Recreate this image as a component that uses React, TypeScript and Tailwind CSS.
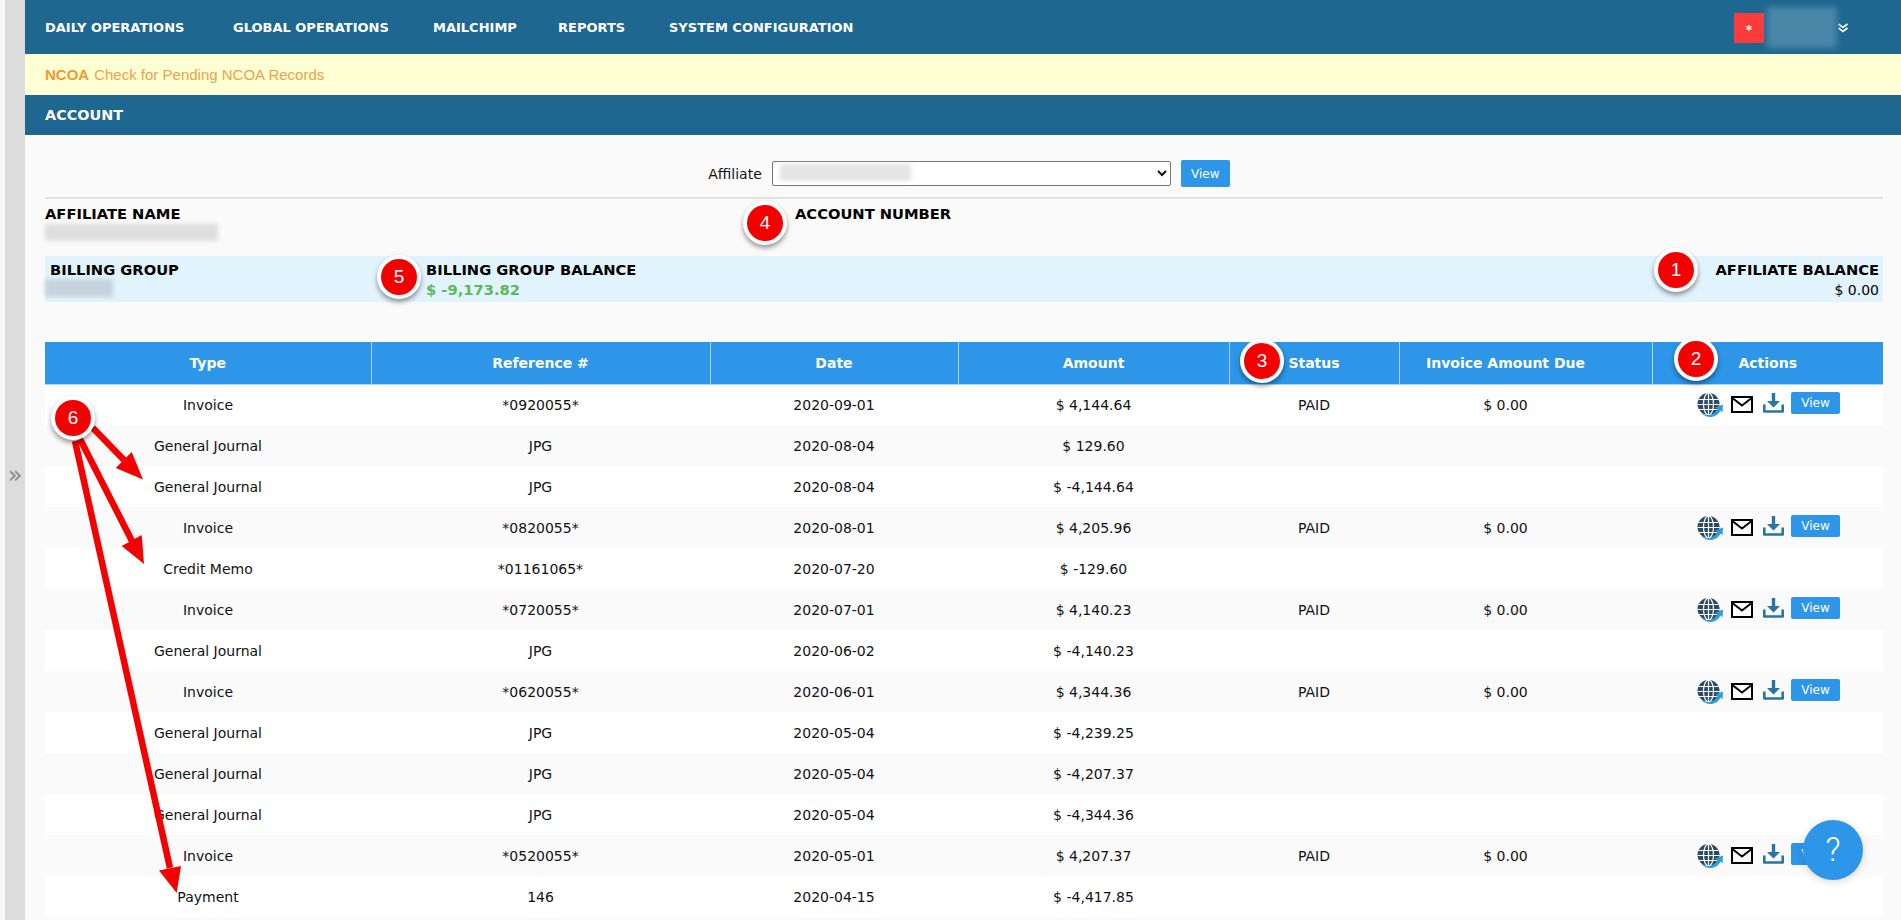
import { ReactNode } from "react";

type Row = { type: string; ref: string; date: string; amount: string; paid?: boolean };

const rows: Row[] = [
  { type: "Invoice", ref: "*0920055*", date: "2020-09-01", amount: "$ 4,144.64", paid: true },
  { type: "General Journal", ref: "JPG", date: "2020-08-04", amount: "$ 129.60" },
  { type: "General Journal", ref: "JPG", date: "2020-08-04", amount: "$ -4,144.64" },
  { type: "Invoice", ref: "*0820055*", date: "2020-08-01", amount: "$ 4,205.96", paid: true },
  { type: "Credit Memo", ref: "*01161065*", date: "2020-07-20", amount: "$ -129.60" },
  { type: "Invoice", ref: "*0720055*", date: "2020-07-01", amount: "$ 4,140.23", paid: true },
  { type: "General Journal", ref: "JPG", date: "2020-06-02", amount: "$ -4,140.23" },
  { type: "Invoice", ref: "*0620055*", date: "2020-06-01", amount: "$ 4,344.36", paid: true },
  { type: "General Journal", ref: "JPG", date: "2020-05-04", amount: "$ -4,239.25" },
  { type: "General Journal", ref: "JPG", date: "2020-05-04", amount: "$ -4,207.37" },
  { type: "General Journal", ref: "JPG", date: "2020-05-04", amount: "$ -4,344.36" },
  { type: "Invoice", ref: "*0520055*", date: "2020-05-01", amount: "$ 4,207.37", paid: true },
  { type: "Payment", ref: "146", date: "2020-04-15", amount: "$ -4,417.85" },
];

const headers = ["Type", "Reference #", "Date", "Amount", "Status", "Invoice Amount Due", "Actions"];

const GlobeIcon = () => (
  <svg width="26" height="24" viewBox="0 0 26 24">
    <circle cx="11.5" cy="11" r="11" fill="#2c4a68" />
    <g stroke="#fff" strokeWidth="1.2" fill="none">
      <ellipse cx="11.5" cy="11" rx="5" ry="11" />
      <path d="M11.5 0V22M1.5 6.5H21.5M0.5 11.5H22.5M2 16.5H21" />
    </g>
    <path d="M4 19.5C10 24 18 22.5 20.5 15.5L18 14.5L26 11.5L25.5 19.5L23.5 17.5C20 25.5 9 26 4 19.5Z" fill="#2f9ce0" />
  </svg>
);

const MailIcon = () => (
  <svg width="22" height="17" viewBox="0 0 22 17">
    <rect x="1" y="1" width="20" height="15" fill="#fff" stroke="#000" strokeWidth="2" />
    <path d="M2 2.5L11 9.5L20 2.5" fill="none" stroke="#000" strokeWidth="2" />
  </svg>
);

const DownloadIcon = () => (
  <svg width="21" height="20" viewBox="0 0 21 20">
    <path d="M8.8 0H12.2V8H17L10.5 14.5L4 8H8.8Z" fill="#2a74a2" />
    <path d="M1.3 12.5V18.5H19.7V12.5" fill="none" stroke="#2a74a2" strokeWidth="2.6" strokeLinejoin="round" strokeLinecap="round" />
  </svg>
);

const Badge = ({ className, children }: { className: string; children: ReactNode }) => (
  <div
    className={
      "absolute w-11 h-11 rounded-full bg-[#f50000] border-4 border-white shadow-[0_3px_5px_rgba(0,0,0,0.4)] flex items-center justify-center text-white text-[19px] font-['Liberation_Sans',sans-serif] " +
      className
    }
  >
    {children}
  </div>
);

export default function App() {
  return (
    <div className="relative w-[1901px] h-[920px] overflow-hidden flex bg-[#fafafa] text-[#111] font-['DejaVu_Sans',sans-serif]">
      <div className="w-[5px] bg-[#f7f7f7]" />
      <div className="w-5 bg-[#dcdcdc] flex items-center justify-center text-[#8a8a8a] text-[24px] pt-[30px]">»</div>

      <main className="flex-1 min-w-0">
        <nav className="h-[54px] pt-px bg-[#1e6791] flex items-center pl-5 text-white text-[13px] font-bold">
          <span className="w-[188px]">DAILY OPERATIONS</span>
          <span className="w-[200px]">GLOBAL OPERATIONS</span>
          <span className="w-[125px]">MAILCHIMP</span>
          <span className="w-[111px]">REPORTS</span>
          <span>SYSTEM CONFIGURATION</span>
          <div className="ml-auto flex items-center pr-[53px]">
            <span className="w-[30px] h-[30px] pt-[5px] bg-[#fb3b3b] text-[13px] flex items-center justify-center">*</span>
            <span className="w-[70px] h-[41px] ml-[3px] bg-[#4a86a8] blur-[3px]" />
            <svg className="ml-px" width="10" height="10" viewBox="0 0 10 10" fill="none" stroke="#fff" strokeWidth="1.6">
              <path d="M0.5 1L5 4.5L9.5 1M0.5 5L5 8.5L9.5 5" />
            </svg>
          </div>
        </nav>

        <div className="h-[41px] pt-px bg-[#ffffd4] flex items-center pl-5 text-[15px] text-[#f0a04b] font-['Liberation_Sans',sans-serif]">
          <b className="mr-[5px] text-[#ee9a2e]">NCOA</b> Check for Pending NCOA Records
        </div>

        <div className="h-10 pt-px bg-[#1e6791] flex items-center pl-5 text-white text-[14.4px] font-bold">ACCOUNT</div>

        <div className="pl-5 pr-[18px]">
          <div className="flex items-center justify-center gap-[10px] pt-[25px] pb-[10px] pl-[10px] text-sm">
            <span>Affiliate</span>
            <div className="relative">
              <select className="block w-[399px] h-[25px] bg-white border border-[#767676] rounded-[2px] text-sm">
                <option></option>
              </select>
              <span className="absolute left-2 top-[3px] w-[131px] h-[17px] bg-[#e4e4e4] blur-[2px]" />
            </div>
            <button className="w-[49px] h-[27px] bg-[#2d96e8] rounded-[2px] text-white text-xs">View</button>
          </div>
          <hr className="border-t-2 border-[#e2e2e2]" />

          <div className="flex h-[57px] pt-[5px] text-[14.7px] leading-5 font-bold text-black">
            <div className="w-[750px]">
              <div>AFFILIATE NAME</div>
              <div className="w-[173px] h-[17px] bg-[#dedede] blur-[2px]" />
            </div>
            <div>ACCOUNT NUMBER</div>
          </div>

          <div className="flex h-[46px] bg-[#e1f3fd] pt-1 text-[14.7px] leading-5 text-black">
            <div className="w-[381px] pl-[5px] font-bold">
              <div>BILLING GROUP</div>
              <div className="w-[68px] h-[18px] -ml-[5px] -mt-px bg-[#c6d3dc] blur-[2px]" />
            </div>
            <div className="flex-1 font-bold">
              <div>BILLING GROUP BALANCE</div>
              <div className="text-[#5cb85c]">$ -9,173.82</div>
            </div>
            <div className="text-right pr-[4px]">
              <div className="font-bold">AFFILIATE BALANCE</div>
              <div className="text-sm">$ 0.00</div>
            </div>
          </div>

          <table className="w-[1838px] mt-10 table-fixed border-collapse text-center text-sm">
            <colgroup>
              <col className="w-[326px]" />
              <col className="w-[339px]" />
              <col className="w-[248px]" />
              <col className="w-[271px]" />
              <col className="w-[170px]" />
              <col className="w-[253px]" />
              <col className="w-[231px]" />
            </colgroup>
            <thead>
              <tr className="h-[42px] bg-[#2d96e8] text-white">
                {headers.map((h, i) => (
                  <th
                    key={h}
                    className={
                      i === 5
                        ? "font-bold border-l border-b border-[#a9d4f5] pr-10"
                        : "font-bold border-l border-b border-[#a9d4f5] first:border-l-0"
                    }
                  >
                    {h}
                  </th>
                ))}
              </tr>
            </thead>
            <tbody>
              {rows.map((r, i) => (
                <tr key={i} className="h-[41px] odd:bg-white even:bg-[#fafafa]">
                  <td className="pt-px">{r.type}</td>
                  <td className="pt-px">{r.ref}</td>
                  <td className="pt-px">{r.date}</td>
                  <td className="pt-px">{r.amount}</td>
                  <td className="pt-px">{r.paid ? "PAID" : ""}</td>
                  <td className="pt-px pr-10">{r.paid ? "$ 0.00" : ""}</td>
                  <td>
                    {r.paid && (
                      <div className="flex items-center justify-center pl-[2px]">
                        <GlobeIcon />
                        <span className="ml-2">
                          <MailIcon />
                        </span>
                        <span className="ml-[10px] -mt-[3px]">
                          <DownloadIcon />
                        </span>
                        <button className="w-[49px] h-[22px] ml-[7px] -mt-[3px] bg-[#2d96e8] rounded-[2px] text-white text-xs">
                          View
                        </button>
                      </div>
                    )}
                  </td>
                </tr>
              ))}
            </tbody>
          </table>
        </div>
      </main>

      <Badge className="left-[1654px] top-[248px]">1</Badge>
      <Badge className="left-[1674px] top-[337px]">2</Badge>
      <Badge className="left-[1240px] top-[339px]">3</Badge>
      <Badge className="left-[743px] top-[201px]">4</Badge>
      <Badge className="left-[377px] top-[255px]">5</Badge>

      <svg className="absolute left-0 top-0 pointer-events-none" width="1901" height="920" viewBox="0 0 1901 920">
        <g stroke="#f50000" strokeWidth="6.5" fill="none">
          <path d="M92.7 427.7L124 460" />
          <path d="M80 439L132 541" />
          <path d="M75 441L170 868" />
        </g>
        <g fill="#f50000">
          <path d="M143 479.6L131.7 452L115.7 468Z" />
          <path d="M144 564L141.7 535L121.7 546Z" />
          <path d="M176.7 893L181 866L159 870.6Z" />
        </g>
      </svg>
      <Badge className="left-[51px] top-[396px]">6</Badge>

      <button className="absolute left-[1803px] top-[820px] w-[60px] h-[60px] rounded-full bg-[#2d96e8] shadow-[0_2px_8px_rgba(0,0,0,0.15)] text-white text-[33px] font-light font-['Roboto',sans-serif]">
        ?
      </button>
    </div>
  );
}
